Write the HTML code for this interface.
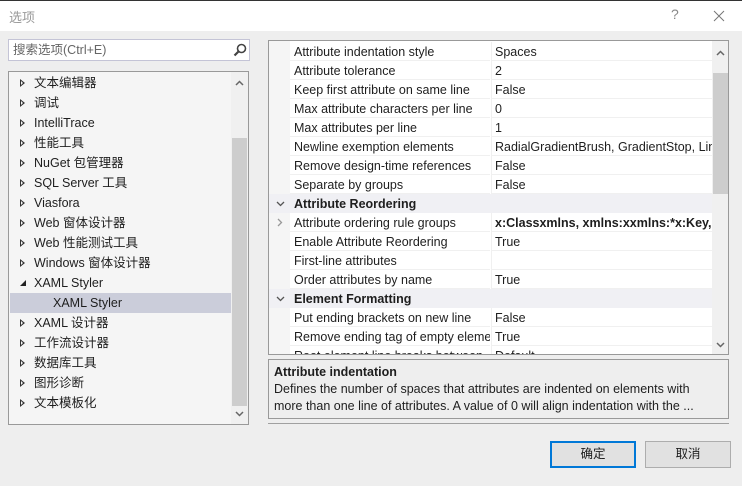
<!DOCTYPE html>
<html><head><meta charset="utf-8"><style>
*{margin:0;padding:0;box-sizing:border-box}
body{width:742px;height:486px;background:#eeeeee;font-family:"Liberation Sans","Noto Sans CJK SC",sans-serif;font-size:12.5px;color:#1e1e1e;position:relative;overflow:hidden}
.abs{position:absolute}
#title{left:0;top:0;width:742px;height:31px;background:#fff;border-top:1px solid #333}
.tree{left:8px;top:71px;width:241px;height:354px;background:#f5f5f5;border:1px solid #999}
.tr{position:absolute;left:0;height:20px;line-height:20px;width:222px;white-space:nowrap}
.tri{position:absolute;left:11px;top:6px;width:0;height:0;border-top:4px solid transparent;border-bottom:4px solid transparent;border-left:5px solid #333}
.tri::after{content:"";position:absolute;left:-4px;top:-2px;border-top:2px solid transparent;border-bottom:2px solid transparent;border-left:2px solid #f5f5f5}
.grid{left:268px;top:40px;width:461px;height:315px;background:#fff;border:1px solid #999;overflow:hidden}
.r{position:absolute;left:0;height:19px;width:443px;line-height:20px;white-space:nowrap}
.r .n{position:absolute;left:21px;width:200px;padding-left:4px;overflow:hidden;border-bottom:1px solid #f0f0f0;height:19px}
.r .v{position:absolute;left:222px;width:221px;padding-left:3px;overflow:hidden;border-bottom:1px solid #f0f0f0;border-left:1px solid #f0f0f0;height:19px}
.cat{background:#f0f0f4;font-weight:bold;padding-left:25px}
.btn{height:27px;width:86px;background:#e1e1e1;border:1px solid #adadad;text-align:center;line-height:25px;font-size:12.5px}
</style></head><body>
<div id="title" class="abs"><span class="abs" style="left:9px;top:6px;color:#999;font-size:13px">选项</span>
<span class="abs" style="left:671px;top:5px;color:#888;font-size:14px">?</span>
<svg class="abs" style="left:713px;top:9px" width="12" height="12"><path d="M1 1L11 11M11 1L1 11" stroke="#777" stroke-width="1"/></svg></div>
<div class="abs" style="left:8px;top:39px;width:242px;height:22px;background:#fff;border:1px solid #c4c4d6;line-height:20px;padding-left:4px;color:#666">搜索选项(Ctrl+E)
<svg class="abs" style="left:224px;top:3px" width="14" height="14"><circle cx="8.5" cy="5.5" r="4" fill="none" stroke="#444" stroke-width="1.6"/><path d="M5.5 8.5L1.5 12.5" stroke="#444" stroke-width="2.2"/></svg></div>
<div class="abs tree">
<div class="tr" style="top:1px"><i class="tri"></i><span style="margin-left:25px">文本编辑器</span></div>
<div class="tr" style="top:21px"><i class="tri"></i><span style="margin-left:25px">调试</span></div>
<div class="tr" style="top:41px"><i class="tri"></i><span style="margin-left:25px">IntelliTrace</span></div>
<div class="tr" style="top:61px"><i class="tri"></i><span style="margin-left:25px">性能工具</span></div>
<div class="tr" style="top:81px"><i class="tri"></i><span style="margin-left:25px">NuGet 包管理器</span></div>
<div class="tr" style="top:101px"><i class="tri"></i><span style="margin-left:25px">SQL Server 工具</span></div>
<div class="tr" style="top:121px"><i class="tri"></i><span style="margin-left:25px">Viasfora</span></div>
<div class="tr" style="top:141px"><i class="tri"></i><span style="margin-left:25px">Web 窗体设计器</span></div>
<div class="tr" style="top:161px"><i class="tri"></i><span style="margin-left:25px">Web 性能测试工具</span></div>
<div class="tr" style="top:181px"><i class="tri"></i><span style="margin-left:25px">Windows 窗体设计器</span></div>
<div class="tr" style="top:201px"><svg class="abs" style="left:11px;top:7px" width="7" height="7"><path d="M6 0L6 6L0 6Z" fill="#222"/></svg><span style="margin-left:25px">XAML Styler</span></div>
<div class="tr" style="top:221px;background:#cbcdda;left:1px"><span style="margin-left:43px">XAML Styler</span></div>
<div class="tr" style="top:241px"><i class="tri"></i><span style="margin-left:25px">XAML 设计器</span></div>
<div class="tr" style="top:261px"><i class="tri"></i><span style="margin-left:25px">工作流设计器</span></div>
<div class="tr" style="top:281px"><i class="tri"></i><span style="margin-left:25px">数据库工具</span></div>
<div class="tr" style="top:301px"><i class="tri"></i><span style="margin-left:25px">图形诊断</span></div>
<div class="tr" style="top:321px"><i class="tri"></i><span style="margin-left:25px">文本模板化</span></div>
<div class="abs" style="left:222px;top:0;width:17px;height:352px;background:#f0f0f0"></div>
<div class="abs" style="left:223px;top:66px;width:15px;height:268px;background:#cdcdcd"></div>
<svg class="abs" style="left:226px;top:8px" width="9" height="6"><path d="M1 5L4.5 1.5L8 5" fill="none" stroke="#666" stroke-width="1.5"/></svg>
<svg class="abs" style="left:226px;top:339px" width="9" height="6"><path d="M1 1L4.5 4.5L8 1" fill="none" stroke="#666" stroke-width="1.5"/></svg>
</div>
<div class="abs grid">
<div class="abs" style="left:0;top:0;width:21px;height:315px;background:#f5f5f5"></div>
<div class="r" style="top:1px"><div class="n">Attribute indentation style</div><div class="v">Spaces</div></div>
<div class="r" style="top:20px"><div class="n">Attribute tolerance</div><div class="v">2</div></div>
<div class="r" style="top:39px"><div class="n">Keep first attribute on same line</div><div class="v">False</div></div>
<div class="r" style="top:58px"><div class="n">Max attribute characters per line</div><div class="v">0</div></div>
<div class="r" style="top:77px"><div class="n">Max attributes per line</div><div class="v">1</div></div>
<div class="r" style="top:96px"><div class="n">Newline exemption elements</div><div class="v">RadialGradientBrush, GradientStop, LinearGradientBrush</div></div>
<div class="r" style="top:115px"><div class="n">Remove design-time references</div><div class="v">False</div></div>
<div class="r" style="top:134px"><div class="n">Separate by groups</div><div class="v">False</div></div>
<div class="r cat" style="top:153px">Attribute Reordering<svg class="abs" style="left:7px;top:7px" width="9" height="6"><path d="M1 1L4.5 4.5L8 1" fill="none" stroke="#555" stroke-width="1.3"/></svg></div>
<div class="r" style="top:172px"><svg class="abs" style="left:8px;top:5px" width="6" height="9"><path d="M1 1L4.5 4.5L1 8" fill="none" stroke="#999" stroke-width="1.3"/></svg><div class="n">Attribute ordering rule groups</div><div class="v" style="font-weight:bold">x:Classxmlns, xmlns:xxmlns:*x:Key, Key</div></div>
<div class="r" style="top:191px"><div class="n">Enable Attribute Reordering</div><div class="v">True</div></div>
<div class="r" style="top:210px"><div class="n">First-line attributes</div><div class="v"></div></div>
<div class="r" style="top:229px"><div class="n">Order attributes by name</div><div class="v">True</div></div>
<div class="r cat" style="top:248px">Element Formatting<svg class="abs" style="left:7px;top:7px" width="9" height="6"><path d="M1 1L4.5 4.5L8 1" fill="none" stroke="#555" stroke-width="1.3"/></svg></div>
<div class="r" style="top:267px"><div class="n">Put ending brackets on new line</div><div class="v">False</div></div>
<div class="r" style="top:286px"><div class="n">Remove ending tag of empty element</div><div class="v">True</div></div>
<div class="r" style="top:305px"><div class="n">Root element line breaks between</div><div class="v">Default</div></div>
<div class="abs" style="left:443px;top:0;width:17px;height:315px;background:#f0f0f0"></div>
<div class="abs" style="left:444px;top:32px;width:15px;height:121px;background:#cdcdcd"></div>
<svg class="abs" style="left:447px;top:9px" width="9" height="6"><path d="M1 5L4.5 1.5L8 5" fill="none" stroke="#666" stroke-width="1.5"/></svg>
<svg class="abs" style="left:447px;top:301px" width="9" height="6"><path d="M1 1L4.5 4.5L8 1" fill="none" stroke="#666" stroke-width="1.5"/></svg>
</div>
<div class="abs" style="left:268px;top:359px;width:461px;height:60px;border:1px solid #999;background:#eeeeee;padding:4px 5px;line-height:17px">
<div style="font-weight:bold">Attribute indentation</div>
<div>Defines the number of spaces that attributes are indented on elements with<br>more than one line of attributes. A value of 0 will align indentation with the ...</div></div>
<div class="abs" style="left:268px;top:423px;width:461px;height:1px;background:#a0a0a0"></div>
<div class="abs btn" style="left:550px;top:441px;border:2px solid #0078d7;line-height:23px">确定</div>
<div class="abs btn" style="left:645px;top:441px">取消</div>
</body></html>
